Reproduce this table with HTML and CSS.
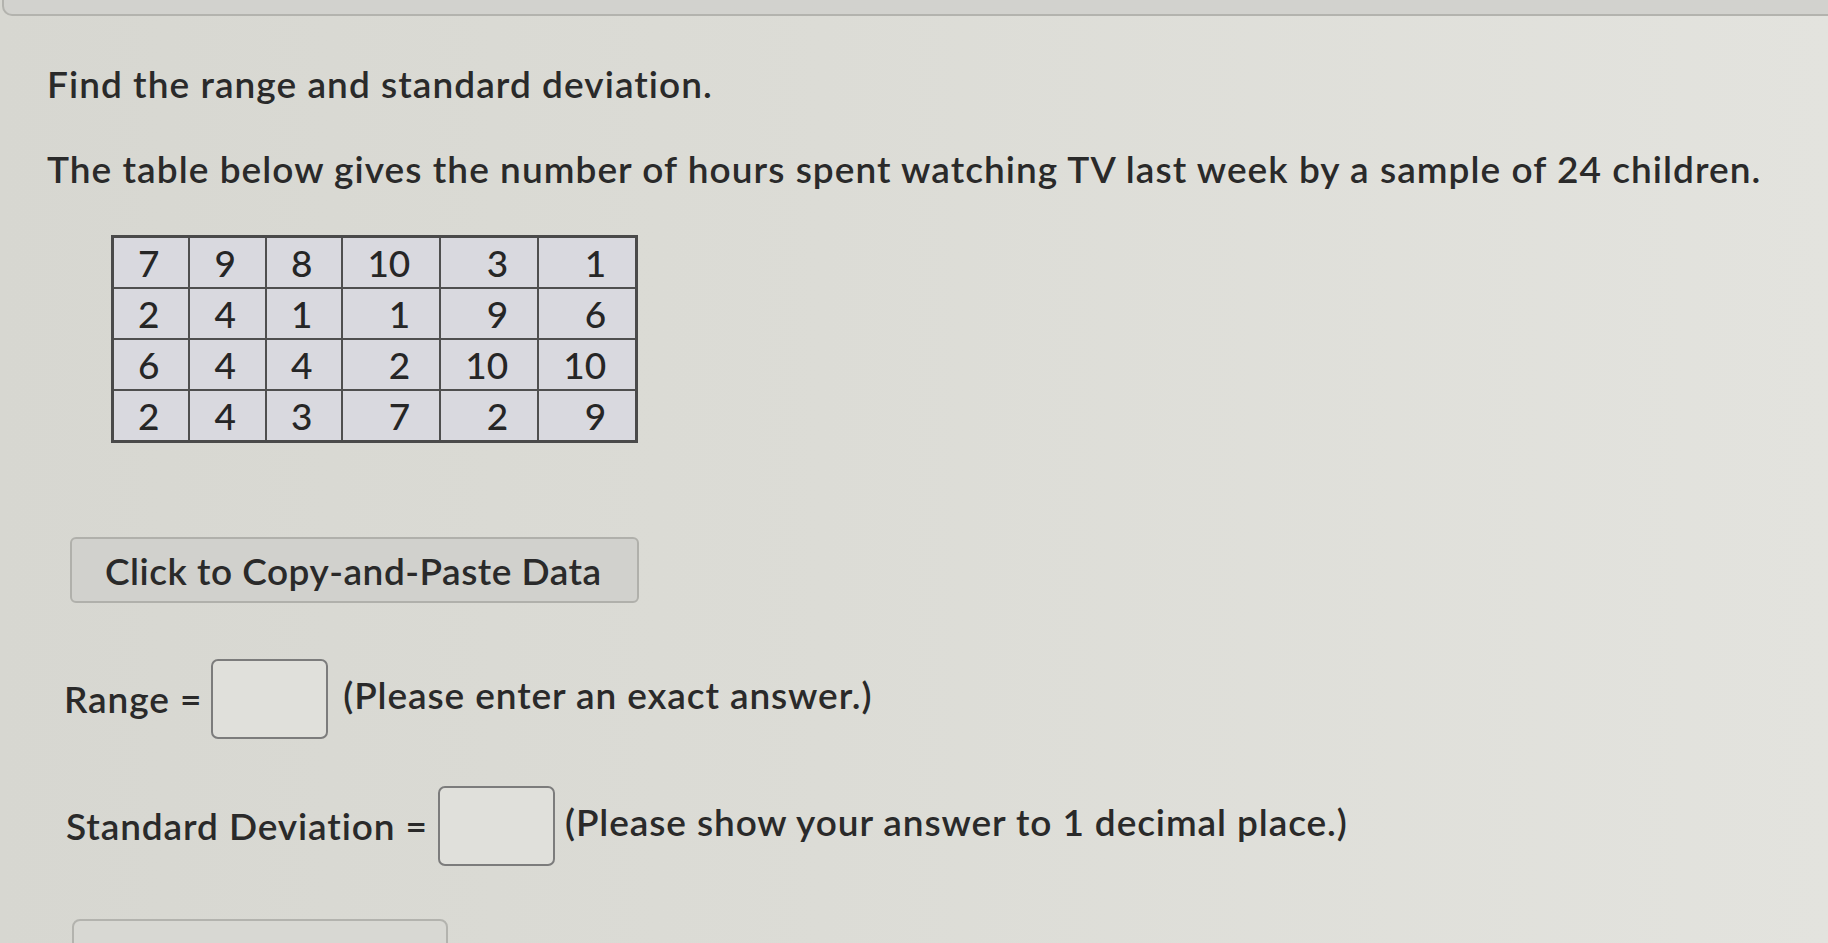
FILE: index.html
```html
<!DOCTYPE html>
<html lang="en">
<head>
<meta charset="utf-8">
<title>Range and standard deviation</title>
<link rel="stylesheet" href="styles.css">
</head>
<body>
<div class="topbar"></div>
<main class="content">
  <p class="title">Find the range and standard deviation.</p>
  <p class="intro">The table below gives the number of hours spent watching TV last week by a sample of 24 children.</p>
  <table class="data">
    <tr><td>7</td><td>9</td><td>8</td><td>10</td><td>3</td><td>1</td></tr>
    <tr><td>2</td><td>4</td><td>1</td><td>1</td><td>9</td><td>6</td></tr>
    <tr><td>6</td><td>4</td><td>4</td><td>2</td><td>10</td><td>10</td></tr>
    <tr><td>2</td><td>4</td><td>3</td><td>7</td><td>2</td><td>9</td></tr>
  </table>
  <button class="copy-btn" type="button">Click to Copy-and-Paste Data</button>
  <div class="answer answer-range">
    <span class="label">Range =</span>
    <input class="box" type="text" aria-label="Range">
    <span class="hint">(Please enter an exact answer.)</span>
  </div>
  <div class="answer answer-sd">
    <span class="label">Standard Deviation =</span>
    <input class="box" type="text" aria-label="Standard Deviation">
    <span class="hint">(Please show your answer to 1 decimal place.)</span>
  </div>
  <div class="bottom-btn"></div>
</main>
</body>
</html>
```
FILE: styles.css
```css
html, body {
  margin: 0;
  padding: 0;
  height: 100%;
  overflow: hidden;
}
body {
  background: linear-gradient(90deg, #d7d7d1 0%, #dcdcd6 45%, #e3e3de 100%);
  font-family: Lato, "Open Sans", sans-serif;
  font-weight: 600;
  letter-spacing: 0.9px;
  color: #2a2a2a;
}
.topbar {
  height: 14px;
  margin-left: 2px;
  background: #d2d2ce;
  border-bottom: 2px solid #b3b3ae;
  border-left: 2px solid #b3b3ae;
  border-bottom-left-radius: 10px;
}
.content {
  padding-left: 47px;
}
.title, .intro {
  margin: 0;
  font-size: 37px;
  line-height: 44px;
  letter-spacing: 1.05px;
}
.title {
  margin-top: 46px;
}
.intro {
  margin-top: 41px;
}
.data {
  margin: 44px 0 0 64px;
  border-collapse: collapse;
  border: 3px solid #4a4a4a;
}
.data td {
  border: 2px solid #4f4f4f;
  background: #d9d9df;
  height: 49px;
  padding: 0 29px 0 24px;
  text-align: right;
  font-size: 37px;
  line-height: 37px;
  font-weight: 500;
  letter-spacing: 0;
  color: #262626;
}
.copy-btn {
  display: block;
  margin: 94px 0 0 23px;
  width: 569px;
  height: 66px;
  padding: 0 0 0 33px;
  text-align: left;
  background: #d1d1cd;
  border: 2px solid #b0b0ab;
  border-radius: 6px;
  font-family: inherit;
  font-weight: 600;
  letter-spacing: 0.5px;
  font-size: 37px;
  color: #2a2a2a;
}
.answer {
  display: flex;
  align-items: center;
}
.answer-range {
  margin: 56px 0 0 17px;
  gap: 9px;
}
.answer-range .box {
  margin-right: 6px;
}
.answer-sd {
  margin: 47px 0 0 19px;
  gap: 10px;
}
.label, .hint {
  font-size: 37px;
  line-height: 44px;
}
.hint {
  margin-top: -8px;
}
.box {
  box-sizing: border-box;
  width: 117px;
  height: 80px;
  border: 2px solid #7c7c7c;
  border-radius: 7px;
  background: #e0e0db;
  margin: 0;
}
.bottom-btn {
  margin: 53px 0 0 25px;
  width: 372px;
  height: 40px;
  border: 2px solid #b3b3ae;
  border-radius: 8px;
  background: #d8d8d3;
}
```
